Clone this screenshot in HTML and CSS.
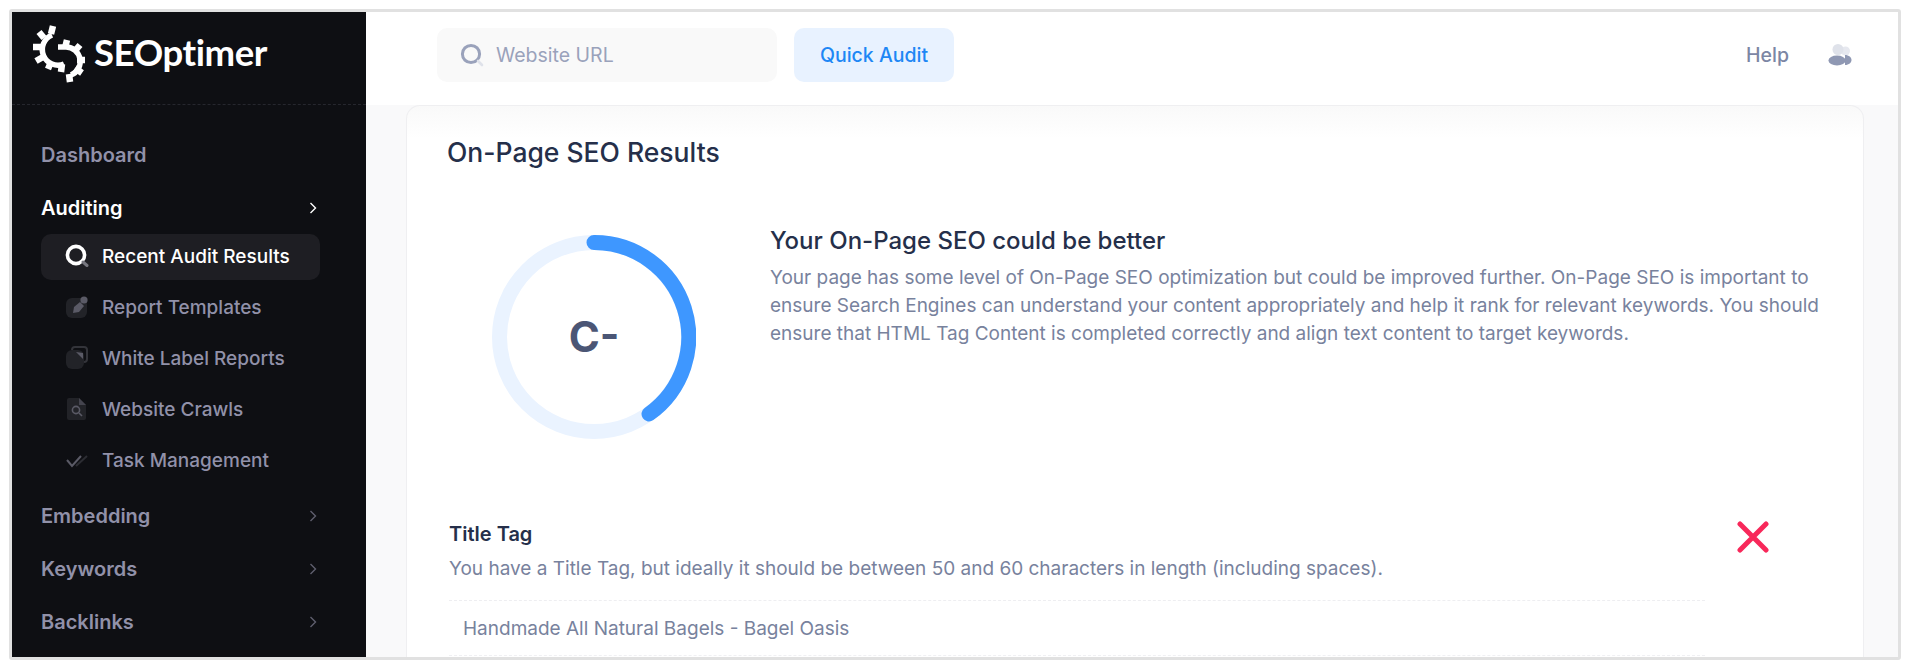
FILE: index.html
```html
<!DOCTYPE html>
<html lang="en">
<head>
  <meta charset="UTF-8">
  <title>On-Page SEO Results</title>
  <link rel="stylesheet" href="styles.css">
</head>
<body>
<div class="frame">
  <!-- Sidebar -->
  <aside class="sidebar">
    <div class="logo">
      <svg class="logo-mark" viewBox="0 0 56 62">
        <g fill="none" stroke="#fff">
          <path d="M22 14 A15.500 15.500 0 0 0 34 43" stroke-width="5.500"/>
          <path d="M23 5 L21 13 M9 11 L14 17 M3 26 L11 26 M6 40 L13 36 M18 48 L21 41 M31 51 L32 43" stroke-width="6.500"/>
          <path d="M28 26 L36 26 A14.500 14.500 0 0 1 41 54" stroke-width="5.500"/>
          <path d="M37 19 L35 27 M50 24 L44 31 M55 39 L47 39 M52 52 L45 47 M40 61 L39 53" stroke-width="6.500"/>
        </g>
      </svg>
      <span class="logo-text">SEOptimer</span>
    </div>
    <nav class="nav">
      <div class="nav-head">Dashboard</div>
      <div class="nav-head open">Auditing
        <svg class="chev" viewBox="0 0 8 12"><path d="M1.500 1l5 5-5 5"/></svg>
      </div>
      <div class="subnav">
        <div class="sub-item active">
          <svg class="sub-icon" viewBox="0 0 24 24">
            <circle cx="11" cy="11" r="8.600" fill="none" stroke="#fff" stroke-width="3.600"/>
            <path d="M18 18l4 3.500" stroke="#77777f" stroke-width="3" stroke-linecap="round"/>
          </svg>
          Recent Audit Results
        </div>
        <div class="sub-item">
          <svg class="sub-icon" viewBox="0 0 24 24">
            <rect x="1" y="3" width="21" height="20" rx="6" fill="#222328"/>
            <path d="M9 12l6-5 4 4-5 6-6 1z" fill="#5a5a66"/>
            <circle cx="19" cy="5" r="3.600" fill="#5a5a66"/>
          </svg>
          Report Templates
        </div>
        <div class="sub-item">
          <svg class="sub-icon" viewBox="0 0 24 24">
            <path d="M7 4a3 3 0 0 1 3-3h9a3 3 0 0 1 3 3v9a3 3 0 0 1-3 3" fill="none" stroke="#33343a" stroke-width="2"/>
            <rect x="1" y="4" width="18" height="19" rx="6" fill="#222328"/>
            <path d="M11 6l7 1v6z" fill="#5a5a66"/>
          </svg>
          White Label Reports
        </div>
        <div class="sub-item">
          <svg class="sub-icon" viewBox="0 0 24 24">
            <path d="M4 1h10l7 7v13a2 2 0 0 1-2 2H4a2 2 0 0 1-2-2V3a2 2 0 0 1 2-2z" fill="#222328"/>
            <path d="M14 1l7 7h-7z" fill="#44444e"/>
            <circle cx="11" cy="13" r="3.600" fill="none" stroke="#5a5a66" stroke-width="1.600"/>
            <path d="M14 16l3 3" stroke="#5a5a66" stroke-width="1.600"/>
          </svg>
          Website Crawls
        </div>
        <div class="sub-item">
          <svg class="sub-icon" viewBox="0 0 24 24">
            <path d="M2 12l5 6 9-10" fill="none" stroke="#5a5a66" stroke-width="2"/>
            <path d="M11 18l11-10" fill="none" stroke="#2c2d33" stroke-width="2"/>
          </svg>
          Task Management
        </div>
      </div>
      <div class="nav-head">Embedding
        <svg class="chev" viewBox="0 0 8 12"><path d="M1.500 1l5 5-5 5"/></svg>
      </div>
      <div class="nav-head">Keywords
        <svg class="chev" viewBox="0 0 8 12"><path d="M1.500 1l5 5-5 5"/></svg>
      </div>
      <div class="nav-head">Backlinks
        <svg class="chev" viewBox="0 0 8 12"><path d="M1.500 1l5 5-5 5"/></svg>
      </div>
    </nav>
  </aside>

  <div class="content">
    <!-- Top bar -->
    <header class="topbar">
      <div class="search">
        <svg class="search-icon" viewBox="0 0 24 24">
          <circle cx="11" cy="11" r="8.600" fill="none" stroke="#9aa2bb" stroke-width="3"/>
          <path d="M18 18l4 4" stroke="#dfe2ea" stroke-width="2.600" stroke-linecap="round"/>
        </svg>
        <span>Website URL</span>
      </div>
      <button class="audit-btn">Quick Audit</button>
      <a class="help">Help</a>
      <svg class="user-icon" viewBox="0 0 24 22">
        <circle cx="17.500" cy="7" r="4.500" fill="#e6e8ef"/>
        <path d="M17 11c4 0 6.500 2.500 6.500 5s-2.500 5-6.500 5z" fill="#8f98b3"/>
        <circle cx="10" cy="5.500" r="5.500" fill="#dfe2ea"/>
        <ellipse cx="9" cy="16.500" rx="8.500" ry="5" fill="#8f98b3"/>
      </svg>
    </header>

    <main class="main">
      <section class="card">
        <h2 class="card-title">On-Page SEO Results</h2>
        <div class="summary">
          <svg class="ring" viewBox="0 0 204 204">
            <circle class="ring-track" cx="102" cy="102" r="94.500"/>
            <path class="ring-bar" d="M102 7.500 A94.500 94.500 0 0 1 157 179"/>
            <text class="ring-grade" x="102" y="117" text-anchor="middle">C-</text>
          </svg>
          <div class="summary-text">
            <h3>Your On-Page SEO could be better</h3>
            <p>Your page has some level of On-Page SEO optimization but could be improved further. On-Page SEO is important to ensure Search Engines can understand your content appropriately and help it rank for relevant keywords. You should ensure that HTML Tag Content is completed correctly and align text content to target keywords.</p>
          </div>
        </div>
        <div class="check">
          <div class="check-body">
            <h4>Title Tag</h4>
            <p>You have a Title Tag, but ideally it should be between 50 and 60 characters in length (including spaces).</p>
            <div class="check-value">Handmade All Natural Bagels - Bagel Oasis</div>
          </div>
          <svg class="cross" viewBox="0 0 32 32"><path d="M3 3l26 26M29 3L3 29"/></svg>
        </div>
      </section>
    </main>
  </div>
</div>
</body>
</html>
```

FILE: styles.css
```css
/* Page frame */
body {
  margin: 0;
  padding: 9px;
  background-color: #fff;
  font-family: Inter, "Liberation Sans", sans-serif;
  overflow: hidden;
}

.frame {
  display: flex;
  width: 1892px;
  height: 651px;
  box-sizing: border-box;
  border: 3px solid #e1e1e1;
  border-radius: 3px;
  overflow: hidden;
}

/* Sidebar */
.sidebar {
  width: 354px;
  flex-shrink: 0;
  background-color: #0e0f13;
}

.logo {
  display: flex;
  align-items: center;
  height: 93px;
  padding: 0 0 13px 18px;
  box-sizing: border-box;
  border-bottom: 1px dashed #26272e;
}

.logo-mark {
  width: 56px;
  height: 62px;
  margin-right: 8px;
}

.logo-text {
  font-family: Lato, sans-serif;
  font-size: 36.500px;
  font-weight: 700;
  letter-spacing: -0.400px;
  color: #fff;
}

.nav {
  padding: 23px 46px 0 29px;
}

.nav-head {
  display: flex;
  align-items: center;
  justify-content: space-between;
  height: 53px;
  font-size: 20px;
  font-weight: 600;
  color: #9191a9;
}

.nav-head.open {
  color: #fff;
}

.chev {
  width: 8px;
  height: 12px;
  margin-right: 3px;
  fill: none;
  stroke: #5f5f6e;
  stroke-width: 1.400;
}

.open .chev {
  stroke: #fff;
}

.subnav {
  margin: 0 0 4px;
}

.sub-item {
  display: flex;
  align-items: center;
  height: 46px;
  margin-bottom: 5px;
  padding: 0 0 2px 24px;
  box-sizing: border-box;
  border-radius: 10px;
  font-size: 19px;
  font-weight: 500;
  color: #9191a9;
}

.sub-item.active {
  background-color: #1e1e23;
  color: #fff;
}

.sub-icon {
  width: 24px;
  height: 24px;
  margin-right: 13px;
  flex-shrink: 0;
}

/* Top bar */
.content {
  flex: 1;
  display: flex;
  flex-direction: column;
  min-width: 0;
}

.topbar {
  display: flex;
  align-items: center;
  height: 93px;
  padding: 0 46px 7px 71px;
  box-sizing: border-box;
  flex-shrink: 0;
}

.search {
  display: flex;
  align-items: center;
  width: 340px;
  height: 54px;
  padding-left: 23px;
  box-sizing: border-box;
  background-color: #f9f9f9;
  border-radius: 10px;
  font-size: 19.500px;
  color: #9aa2bb;
}

.search-icon {
  width: 24px;
  height: 24px;
  margin-right: 12px;
}

.audit-btn {
  width: 160px;
  height: 54px;
  margin-left: 17px;
  background-color: #e8f2ff;
  border: none;
  border-radius: 10px;
  font-family: inherit;
  font-size: 19.500px;
  font-weight: 500;
  color: #1e87f5;
}

.help {
  margin-left: auto;
  font-size: 19.500px;
  font-weight: 500;
  color: #7c86a4;
}

.user-icon {
  width: 24px;
  height: 22px;
  margin-left: 39px;
}

/* Main area */
.main {
  flex: 1;
  padding: 0 34px 0 40px;
  background-color: #f9f9fa;
  min-height: 0;
}

.card {
  height: 100%;
  padding: 0 40px;
  box-sizing: border-box;
  background: linear-gradient(#f9f9f9, #fff 32px);
  border: 1px solid #efeff1;
  border-bottom: none;
  border-radius: 14px 14px 0 0;
}

.card-title {
  margin: 0;
  padding-top: 29px;
  font-size: 26.500px;
  line-height: 34px;
  font-weight: 500;
  color: #252f4a;
}

.summary {
  display: flex;
  margin-top: 66px;
  padding-left: 45px;
}

.ring {
  width: 204px;
  height: 204px;
  flex-shrink: 0;
}

.ring-track {
  fill: none;
  stroke: #eaf3ff;
  stroke-width: 15;
}

.ring-bar {
  fill: none;
  stroke: #3e97ff;
  stroke-width: 15;
  stroke-linecap: round;
}

.ring-grade {
  font-size: 42px;
  font-weight: 700;
  fill: #4b5675;
}

.summary-text {
  margin-left: 74px;
  margin-top: -12px;
}

.summary-text h3 {
  margin: 0 0 5px;
  font-size: 24px;
  line-height: 36px;
  font-weight: 500;
  color: #252f4a;
}

.summary-text p {
  margin: 0;
  font-size: 19px;
  line-height: 28px;
  color: #78829d;
}

.check {
  display: flex;
  margin-top: 80px;
  padding-left: 2px;
}

.check-body {
  width: 1256px;
}

.check-body h4 {
  margin: 0;
  font-size: 20px;
  line-height: 30px;
  font-weight: 600;
  color: #252f4a;
}

.check-body p {
  margin: 0;
  padding: 6px 0 17px;
  font-size: 19px;
  line-height: 28px;
  color: #78829d;
  border-bottom: 1px dashed #eeeef1;
}

.check-value {
  padding: 14px 14px 12px;
  font-size: 19px;
  line-height: 28px;
  color: #78829d;
  border-bottom: 1px dashed #f0f0f3;
}

.cross {
  width: 32px;
  height: 32px;
  margin: 2px 0 0 32px;
  fill: none;
  stroke: #f8285a;
  stroke-width: 5;
  stroke-linecap: round;
}
```
